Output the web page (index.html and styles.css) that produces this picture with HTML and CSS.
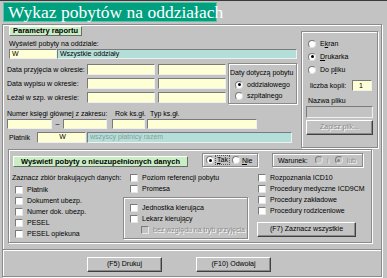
FILE: index.html
```html
<!DOCTYPE html>
<html lang="pl">
  <head>
    <meta charset="UTF-8" />
    <title>Wykaz pobytów na oddziałach</title>
    <link rel="stylesheet" href="styles.css">
  </head>

  <body>
    <!-- nagłówek -->
    <h1 class="title">Wykaz pobytów na oddziałach</h1>

    <div class="dialog">
      <div class="top">
        <!-- parametry raportu -->
        <div class="params">
          <div class="tab tab-params">Parametry raportu</div>
          <div class="lbl-top">Wyświetl pobyty na oddziale:</div>
          <div class="row-oddz">
            <span class="field yellow w-oddz">W</span>
            <span class="field teal w-oddz-name">Wszystkie oddziały</span>
          </div>

          <div class="dates">
            <div class="date-rows">
              <div class="date-row">
                <span class="date-lbl">Data przyjęcia w okresie:</span>
                <span class="field yellow w-date"></span>
                <span class="field yellow w-date"></span>
              </div>
              <div class="date-row">
                <span class="date-lbl">Data wypisu w okresie:</span>
                <span class="field yellow w-date"></span>
                <span class="field yellow w-date"></span>
              </div>
              <div class="date-row">
                <span class="date-lbl">Leżał w szp. w okresie:</span>
                <span class="field yellow w-date"></span>
                <span class="field yellow w-date"></span>
              </div>
            </div>
            <div class="box daty">
              <div class="daty-lbl">Daty dotyczą pobytu</div>
              <div class="opt"><span class="radio checked"></span>oddziałowego</div>
              <div class="opt"><span class="radio"></span>szpitalnego</div>
            </div>
          </div>

          <div class="ksiega-labels">
            <span class="k-lbl1">Numer księgi głównej z zakresu:</span>
            <span class="k-lbl2">Rok ks.gł.</span>
            <span>Typ ks.gł.</span>
          </div>
          <div class="ksiega-row">
            <span class="field yellow w-k1"></span>
            <span class="dash">–</span>
            <span class="field yellow w-k2"></span>
            <span class="field yellow w-rok"></span>
            <span class="field yellow w-typ"></span>
          </div>

          <div class="platnik-row">
            <span class="platnik-lbl">Płatnik</span>
            <span class="field yellow w-platnik">W</span>
            <span class="field teal dim w-platnik-name">wszyscy płatnicy razem</span>
          </div>
        </div>

        <!-- wyjście -->
        <div class="box output">
          <div class="out-opt"><span class="radio"></span>E<u>k</u>ran</div>
          <div class="out-opt"><span class="radio checked"></span><u>D</u>rukarka</div>
          <div class="out-opt"><span class="radio"></span>Do p<u>l</u>iku</div>
          <div class="kopii-row">
            <span class="kopii-lbl">liczba kopii:</span>
            <span class="field yellow w-kopii">1</span>
          </div>
          <div class="plik-lbl">Nazwa pliku</div>
          <span class="field gray w-plik"></span>
          <div class="btn disabled btn-plik">Zapisz plik...</div>
        </div>
      </div>

      <!-- nieuzupełnione dane -->
      <div class="box missing">
        <div class="missing-head">
          <div class="tab tab-missing">Wyświetl pobyty o nieuzupełnionych danych</div>
          <div class="box taknie">
            <span class="radio checked"></span><span class="focus"><u>T</u>ak</span>
            <span class="radio"></span><span><u>N</u>ie</span>
          </div>
          <div class="box warunek">
            <span class="war-lbl">Warunek:</span>
            <span class="radio off"></span><span class="dis">i</span>
            <span class="radio off checked"></span><span class="dis">lub</span>
          </div>
        </div>

        <div class="missing-grid">
          <div class="col col1">
            <div class="col-lbl">Zaznacz zbiór brakujących danych:</div>
            <div class="chk"><span class="checkbox"></span>Płatnik</div>
            <div class="chk"><span class="checkbox"></span>Dokument ubezp.</div>
            <div class="chk"><span class="checkbox"></span>Numer dok. ubezp.</div>
            <div class="chk"><span class="checkbox"></span>PESEL</div>
            <div class="chk"><span class="checkbox"></span>PESEL opiekuna</div>
          </div>
          <div class="col col2">
            <div class="chk"><span class="checkbox"></span>Poziom referencji pobytu</div>
            <div class="chk"><span class="checkbox"></span>Promesa</div>
            <div class="box kier">
              <div class="chk"><span class="checkbox"></span>Jednostka kierująca</div>
              <div class="chk"><span class="checkbox"></span>Lekarz kierujący</div>
              <div class="chk bez"><span class="checkbox off"></span><span class="dis">bez względu na tryb przyjęcia</span></div>
            </div>
          </div>
          <div class="col col3">
            <div class="chk"><span class="checkbox"></span>Rozpoznania ICD10</div>
            <div class="chk"><span class="checkbox"></span>Procedury medyczne ICD9CM</div>
            <div class="chk"><span class="checkbox"></span>Procedury zakładowe</div>
            <div class="chk"><span class="checkbox"></span>Procedury rodziceniowe</div>
            <div class="btn btn-all">(F7) Zaznacz wszystkie</div>
          </div>
        </div>
      </div>

      <div class="sep"></div>

      <div class="buttons">
        <div class="btn btn-main">(F5) Drukuj</div>
        <div class="btn btn-main">(F10) Odwołaj</div>
      </div>
    </div>
  </body>
</html>
```

FILE: styles.css
```css
* {
  box-sizing: border-box;
}

body {
  margin: 0;
  width: 387px;
  height: 278px;
  overflow: hidden;
  background-color: #c3c3c3;
  border-top: 1px solid #3a3a3a;
  font-family: "Liberation Sans", Arial, sans-serif;
  font-size: 7px;
  color: #000;
}

u {
  text-decoration: underline;
}

.title {
  margin: 1px 0 0 3px;
  width: 214px;
  height: 20px;
  padding-left: 4px;
  background-color: #00a07f;
  border: 1px solid #5ec2a6;
  color: #fff;
  font-family: "Liberation Serif", "Times New Roman", serif;
  font-size: 17.5px;
  font-weight: normal;
  line-height: 18px;
  white-space: nowrap;
}

.dialog {
  margin: 2px 0 0 2px;
  width: 380px;
  height: 253px;
  border: 1px solid #8a8a8a;
  box-shadow: inset 1px 1px 0 #fff, 1px 1px 0 #fff;
}

/* obramowania */
.box {
  border: 1px solid #8a8a8a;
  box-shadow: inset 1px 1px 0 #fff, 1px 1px 0 #fff;
}

.field {
  display: block;
  height: 100%;
  padding-left: 2px;
  border-top: 1px solid #7a7a7a;
  border-left: 1px solid #7a7a7a;
  border-bottom: 1px solid #f0f0f0;
  border-right: 1px solid #f0f0f0;
  line-height: 8px;
  white-space: nowrap;
  overflow: hidden;
}

.yellow {
  background-color: #ffffd6;
}

.teal {
  background-color: #b4dfd9;
}

.gray {
  background-color: #c3c3c3;
}

.dim {
  color: #8c9c9c;
}

.dis {
  color: #8a8a8a;
  text-shadow: 1px 1px 0 #fff;
}

.tab {
  height: 11px;
  background-color: #c9eec3;
  border: 1px solid #fff;
  border-right-color: #6c6c6c;
  border-bottom-color: #6c6c6c;
  font-size: 7.5px;
  font-weight: bold;
  line-height: 9px;
  text-align: center;
  white-space: nowrap;
}

.radio {
  display: inline-block;
  position: relative;
  flex: none;
  width: 8px;
  height: 8px;
  margin-right: 4px;
  border-radius: 50%;
  background-color: #fff;
  border: 1px solid #7a7a7a;
  border-right-color: #e0e0e0;
  border-bottom-color: #e0e0e0;
  vertical-align: middle;
}

.radio.checked::after {
  content: "";
  position: absolute;
  left: 1.5px;
  top: 1.5px;
  width: 3px;
  height: 3px;
  border-radius: 50%;
  background-color: #000;
}

.radio.off {
  background-color: #c3c3c3;
}

.radio.off.checked::after {
  background-color: #8a8a8a;
}

.checkbox {
  display: inline-block;
  flex: none;
  width: 8px;
  height: 8px;
  margin-right: 4px;
  background-color: #fff;
  border: 1px solid #7a7a7a;
  border-right-color: #e6e6e6;
  border-bottom-color: #e6e6e6;
}

.checkbox.off {
  background-color: #c3c3c3;
}

.btn {
  height: 15px;
  background-color: #c3c3c3;
  border: 1px solid #fff;
  border-right-color: #404040;
  border-bottom-color: #404040;
  box-shadow: inset -1px -1px 0 #8a8a8a;
  line-height: 12px;
  text-align: center;
  white-space: nowrap;
}

.btn.disabled {
  color: #8a8a8a;
  text-shadow: 1px 1px 0 #fff;
}

/* górna część */
.top {
  display: flex;
  height: 124px;
}

.params {
  width: 296px;
}

.tab-params {
  margin: 1px 0 0 6px;
  width: 73px;
  height: 10px;
  line-height: 8px;
}

.lbl-top {
  margin: 3px 0 0 6px;
  height: 9px;
  line-height: 9px;
}

.row-oddz {
  display: flex;
  margin: 1px 0 0 6px;
  height: 10px;
}

.w-oddz {
  width: 48px;
}

.w-oddz-name {
  width: 240px;
}

.dates {
  display: flex;
  margin: 4px 0 0 4px;
}

.date-rows {
  display: flex;
  flex-direction: column;
  gap: 3px;
  padding-top: 1px;
}

.date-row {
  display: flex;
  gap: 3px;
  height: 11px;
}

.date-lbl {
  width: 77px;
  line-height: 11px;
  white-space: nowrap;
}

.w-date {
  width: 68px;
}

.daty {
  margin-left: 2px;
  width: 69px;
  height: 41px;
  padding: 5px 0 0 1px;
}

.daty-lbl {
  height: 10px;
  white-space: nowrap;
}

.opt {
  display: flex;
  align-items: center;
  height: 11px;
  padding-left: 5px;
}

.ksiega-labels {
  display: flex;
  margin: 5px 0 0 4px;
  height: 9px;
  line-height: 9px;
  white-space: nowrap;
}

.k-lbl1 {
  width: 108px;
}

.k-lbl2 {
  width: 35px;
}

.ksiega-row {
  display: flex;
  margin: 1px 0 0 4px;
  height: 10px;
}

.dash {
  width: 11px;
  line-height: 10px;
  text-align: center;
}

.w-k1 {
  width: 45px;
}

.w-k2 {
  width: 44px;
}

.w-rok {
  margin-left: 5px;
  width: 33px;
}

.w-typ {
  margin-left: 2px;
  width: 110px;
}

.platnik-row {
  display: flex;
  margin: 3px 0 0 6px;
  height: 11px;
}

.platnik-lbl {
  width: 28px;
  line-height: 11px;
}

.w-platnik {
  width: 49px;
  text-align: center;
}

.w-platnik-name {
  margin-left: 1px;
  width: 205px;
}

.output {
  margin: 6px 0 0 2px;
  width: 77px;
  height: 117px;
  padding: 5px 0 0 6px;
}

.out-opt {
  display: flex;
  align-items: center;
  height: 13px;
}

.kopii-row {
  display: flex;
  margin-top: 4px;
  height: 11px;
  padding-left: 2px;
}

.kopii-lbl {
  width: 42px;
  line-height: 11px;
}

.w-kopii {
  width: 20px;
  padding-left: 6px;
  line-height: 9px;
}

.plik-lbl {
  margin-top: 5px;
  height: 9px;
  line-height: 9px;
}

.w-plik {
  margin: 1px 0 0 -2px;
  width: 67px;
  height: 12px;
}

.btn-plik {
  margin: 2px 0 0 -2px;
  width: 67px;
}

/* nieuzupełnione dane */
.missing {
  margin-left: 5px;
  width: 364px;
  height: 94px;
}

.missing-head {
  display: flex;
  align-items: flex-start;
  height: 17px;
}

.tab-missing {
  margin: 6px 0 0 4px;
  width: 175px;
}

.taknie {
  display: flex;
  align-items: center;
  margin: 3px 0 0 14px;
  width: 56px;
  height: 14px;
  padding-left: 3px;
  white-space: nowrap;
}

.taknie .radio {
  margin-right: 2px;
}

.focus {
  flex: none;
  margin-right: 3px;
  padding: 0 1px;
  outline: 1px dotted #555;
  outline-offset: 0;
  line-height: 8px;
}

.warunek {
  display: flex;
  align-items: center;
  margin: 3px 0 0 14px;
  width: 91px;
  height: 14px;
  padding-left: 5px;
}

.war-lbl {
  width: 38px;
}

.warunek .dis {
  margin-right: 6px;
}

.missing-grid {
  display: grid;
  grid-template-columns: 114px 134px 114px;
  margin-top: 5px;
}

.chk {
  display: flex;
  align-items: center;
  height: 11px;
  white-space: nowrap;
}

.col1 .col-lbl {
  height: 12px;
  padding-left: 3px;
  line-height: 11px;
  white-space: nowrap;
}

.col1 .chk {
  padding-left: 6px;
}

.col2 > .chk {
  padding-left: 7px;
}

.kier {
  margin-top: 3px;
  width: 125px;
  height: 42px;
  padding: 4px 0 0 6px;
}

.kier .bez {
  padding-left: 11px;
}

.col3 .chk {
  padding-left: 1px;
}

.btn-all {
  margin-top: 6px;
  width: 99px;
}

.sep {
  margin-top: 6px;
  height: 2px;
  border-top: 1px solid #8a8a8a;
  border-bottom: 1px solid #fff;
}

.buttons {
  display: flex;
  gap: 34px;
  margin-top: 6px;
  padding-left: 84px;
}

.btn-main {
  width: 75px;
}
```
